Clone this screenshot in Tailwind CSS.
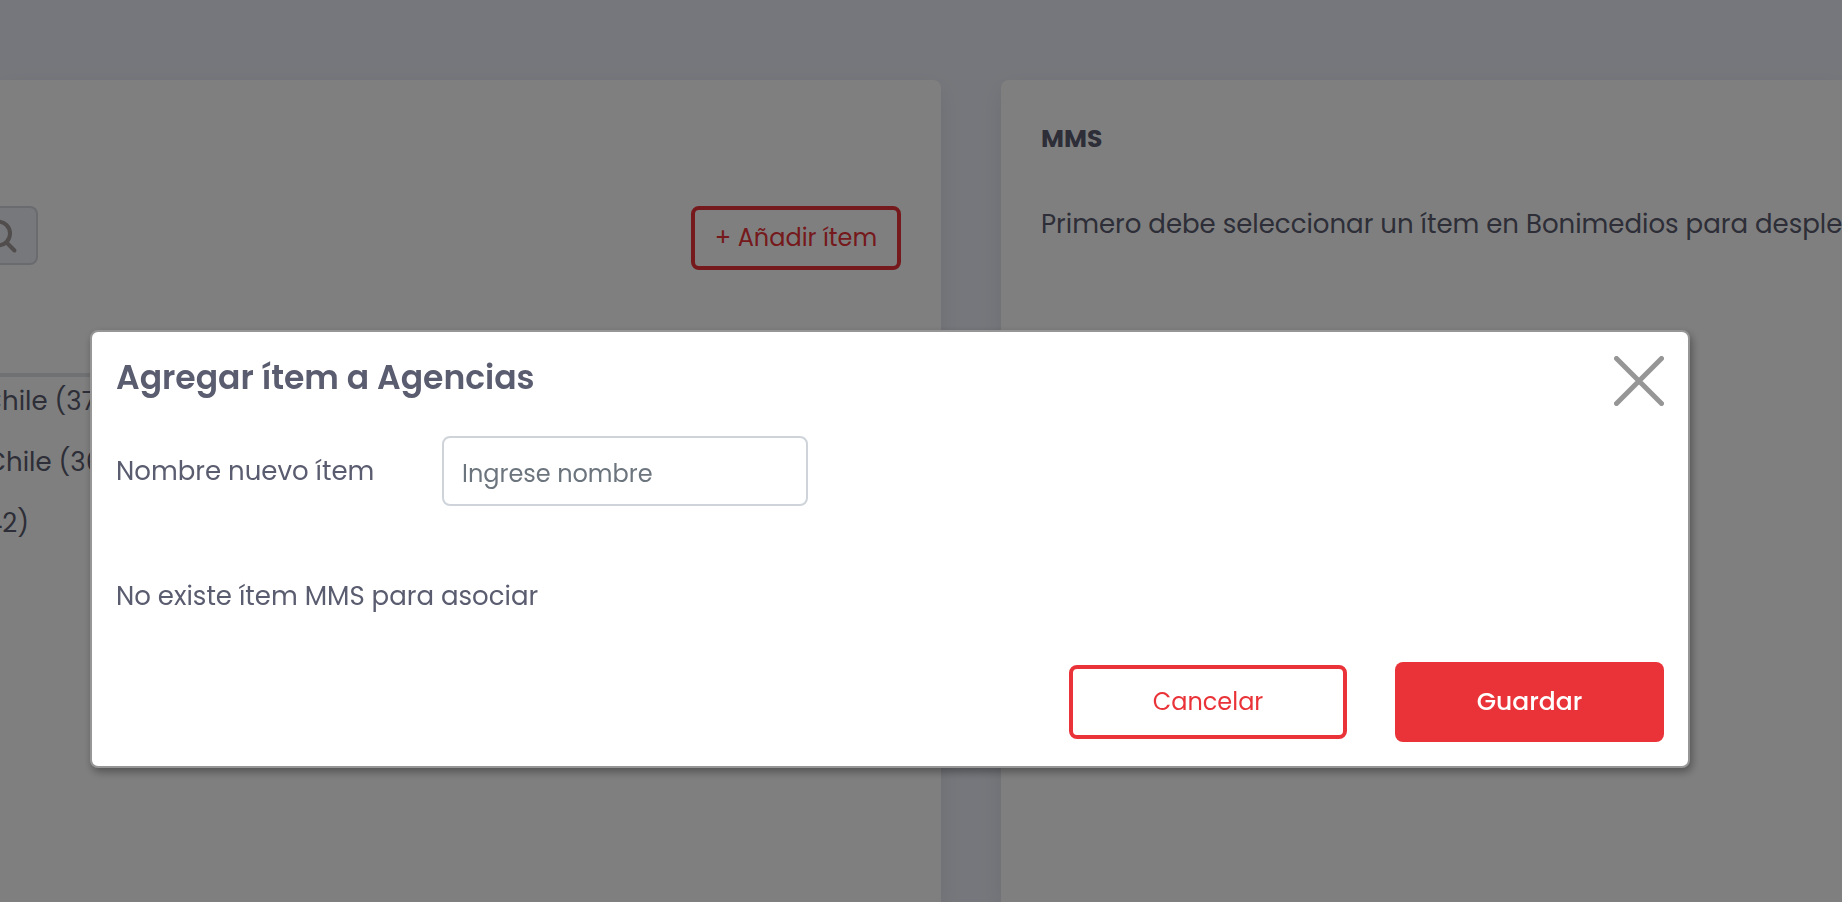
<!DOCTYPE html>
<html lang="es">
<head>
<meta charset="utf-8">
<title>Agregar ítem a Agencias</title>
<script src="https://cdn.jsdelivr.net/npm/@tailwindcss/browser@4"></script>
</head>
<body class="min-h-screen overflow-hidden bg-[#edeff8] font-['Poppins','Inter',sans-serif] text-[26px] leading-10 text-[#5a5c6f]">
  <main class="flex h-screen gap-[60px] pt-20">
    <section class="w-[941px] shrink-0 rounded-tr-lg bg-white pt-[126px] shadow-[0_8px_24px_rgba(0,0,0,0.08)]">
      <div class="flex items-start justify-between pr-10">
        <button type="button" aria-label="Buscar" class="h-[59px] w-[38px] overflow-hidden rounded-r-lg border-2 border-l-0 border-[#d4d6dc] bg-[#edf0f8]">
          <svg class="h-[55px] w-9" viewBox="0 0 36 55" fill="none" stroke="#a39a9a" stroke-width="4" stroke-linecap="round"><circle cx="-2" cy="25.500" r="12"/><path d="M7 35l7.500 7.500"/></svg>
        </button>
        <button type="button" class="h-16 w-[210px] whitespace-nowrap rounded-lg border-4 border-[#ea3338] text-2xl text-[#ea3338]">+ Añadir ítem</button>
      </div>
      <ul class="mt-[103px] mr-10 -ml-[18px] border-t-4 border-[#dee2e6] pt-1">
        <li class="h-[61px]">Chile (37)</li>
        <li class="h-[61px] pl-1">Chile (36)</li>
        <li class="h-[61px] pl-1">42)</li>
      </ul>
    </section>
    <section class="min-w-0 flex-1 overflow-x-clip rounded-tl-lg bg-white pt-[39px] pl-10 shadow-[0_8px_24px_rgba(0,0,0,0.08)]">
      <h2 class="text-[25px] font-bold">MMS</h2>
      <p class="mt-[45px] whitespace-nowrap">Primero debe seleccionar un ítem en Bonimedios para desplegar</p>
    </section>
  </main>

  <div class="fixed inset-0 bg-black/50 pt-[330px] pr-[152px] pl-[90px]">
    <div role="dialog" aria-modal="true" aria-labelledby="titulo" class="rounded-lg border-2 border-[#969696] bg-white p-6 shadow-[2px_4px_8px_rgba(0,0,0,0.35)]">
      <div class="flex items-start justify-between">
        <h1 id="titulo" class="pt-0.5 text-[33px] font-semibold">Agregar ítem a Agencias</h1>
        <button type="button" aria-label="Cerrar" class="size-[50px]">
          <svg class="size-[50px]" viewBox="0 0 50 50" fill="none" stroke="#969696" stroke-width="5" stroke-linecap="round"><path d="M2.500 2.500l45 45M47.500 2.500l-45 45"/></svg>
        </button>
      </div>
      <form>
        <div class="mt-[30px] flex items-center">
          <label for="nombre" class="w-[326px]">Nombre nuevo ítem</label>
          <input id="nombre" type="text" placeholder="Ingrese nombre" class="h-[70px] w-[366px] rounded-lg border-2 border-[#ced4da] bg-white px-[18px] pt-1 text-2xl placeholder:text-[#6c757d]">
        </div>
        <p class="mt-[70px]">No existe ítem MMS para asociar</p>
        <div class="mt-[46px] flex items-center justify-end gap-12">
          <button type="button" class="h-[74px] w-[278px] rounded-lg border-4 border-[#ea3338] text-2xl text-[#ea3338]">Cancelar</button>
          <button type="submit" class="h-20 w-[269px] rounded-lg bg-[#ea3338] text-[25px] font-medium text-white">Guardar</button>
        </div>
      </form>
    </div>
  </div>
</body>
</html>
